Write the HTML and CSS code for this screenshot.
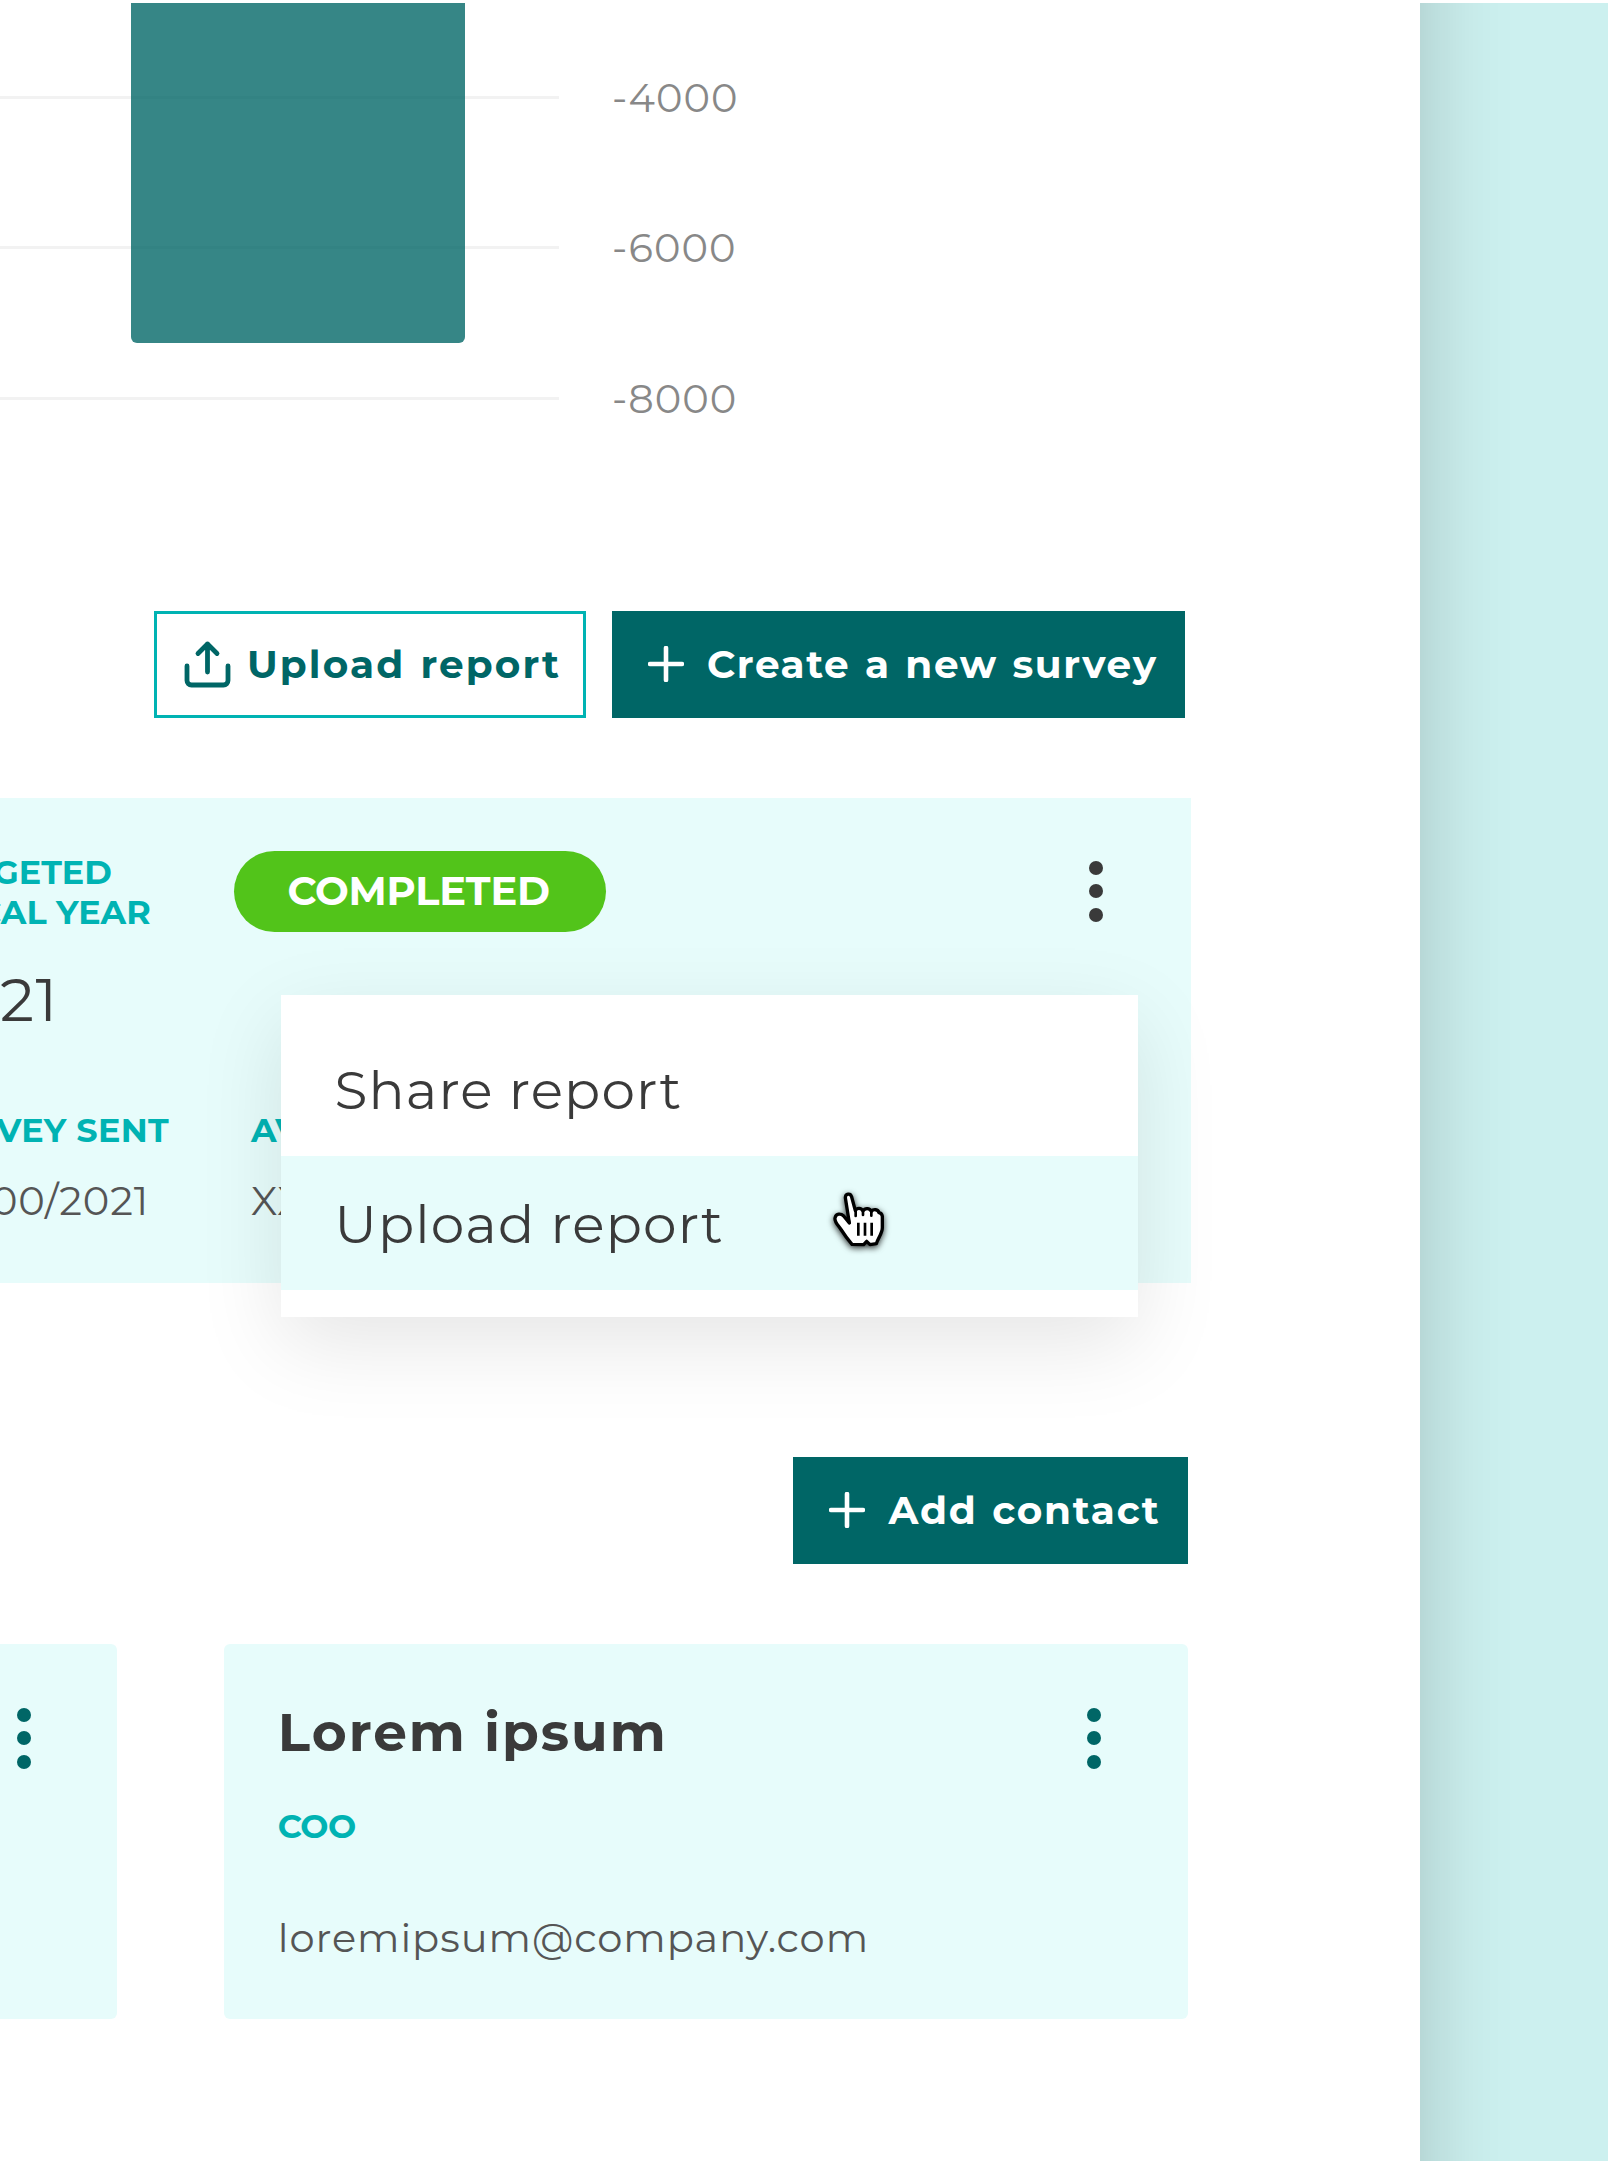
FILE: index.html
```
<!DOCTYPE html>
<html lang="en">
<head>
    <meta charset="UTF-8">
    <meta name="viewport" content="width=device-width, initial-scale=1.0">
    <title>Company report</title>
    <link rel="stylesheet" href="styles.css">
</head>
<body>

    <div class="layout">
        <main class="panel">

            <section class="chart">
                <div class="tick"><span class="grid-line"></span><span class="tick-label">-4000</span></div>
                <div class="tick"><span class="grid-line"></span><span class="tick-label">-6000</span></div>
                <div class="tick"><span class="grid-line"></span><span class="tick-label">-8000</span></div>
                <div class="bar"></div>
            </section>

            <div class="actions">
                <button class="btn btn-outline">
                    <svg class="upload-icon" width="48" height="48" viewBox="0 0 48 48" fill="none" stroke="currentColor" stroke-width="4.8" stroke-linecap="round" stroke-linejoin="round">
                        <path d="M3 26v14.5a4.500 4.500 0 0 0 4.500 4.500h32a4.500 4.500 0 0 0 4.500-4.500V26"/>
                        <path d="M23.500 32V4M14 13.500l9.500-9.500 9.500 9.500"/>
                    </svg>
                    <span>Upload report</span>
                </button>
                <button class="btn btn-create">
                    <svg class="plus-icon" width="36" height="36" viewBox="0 0 36 36" fill="none" stroke="currentColor" stroke-width="4.600" stroke-linecap="round">
                        <path d="M18 2v32M2 18h32"/>
                    </svg>
                    <span>Create a new survey</span>
                </button>
            </div>

            <section class="survey-card">
                <div class="survey-col">
                    <div class="label">TARGETED<br>FISCAL YEAR</div>
                    <div class="year">2021</div>
                    <div class="label sent">SURVEY SENT</div>
                    <div class="value">00/00/2021</div>
                </div>
                <div class="survey-col-status">
                    <div class="status">COMPLETED</div>
                    <div class="label">AVG</div>
                    <div class="value">XX</div>
                </div>
                <div class="dots dots-dark"><i></i><i></i><i></i></div>

                <div class="menu">
                    <div class="menu-item">Share report</div>
                    <div class="menu-item active">Upload report</div>
                    <svg class="cursor" width="90" height="90" viewBox="0 0 270 270">
                        <path d="M91 68C91 55 107 53 110 66L121 107C126 98 139 98 144 108C150 98 164 99 169 109C176 101 189 103 192 113C198 114 201 118 202 124V158C202 174 190 188 184 206L165 209L155 199L146 209L111 208C97 192 86 176 77 162C69 150 58 141 60 129C63 114 78 115 86 123L103 144Z" fill="#fff" stroke="#000" stroke-width="10" stroke-linejoin="round"/>
                        <path d="M122 106v17M144 107v13M169 108v14M103 144l-3-16" stroke="#000" stroke-width="8" stroke-linecap="round"/>
                        <path d="M130 143v39M150 143v39M170 143v39" stroke="#000" stroke-width="8"/>
                    </svg>
                </div>
            </section>

            <div class="actions actions-contact">
                <button class="btn btn-add">
                    <svg class="plus-icon" width="36" height="36" viewBox="0 0 36 36" fill="none" stroke="currentColor" stroke-width="4.600" stroke-linecap="round">
                        <path d="M18 2v32M2 18h32"/>
                    </svg>
                    <span>Add contact</span>
                </button>
            </div>

            <section class="contacts">
                <div class="contact-card contact-prev">
                    <div class="dots"><i></i><i></i><i></i></div>
                </div>
                <div class="contact-card">
                    <div class="contact-info">
                        <h2>Lorem ipsum</h2>
                        <div class="label role">COO</div>
                        <div class="email">loremipsum@company.com</div>
                    </div>
                    <div class="dots"><i></i><i></i><i></i></div>
                </div>
            </section>

        </main>
    </div>

</body>
</html>
```
FILE: styles.css
```
* {
    box-sizing: border-box;
}

body {
    margin: 0;
    padding-top: 2.5px;
    height: 2161px;
    overflow: hidden;
    background: #fff;
    color: #3a3a3a;
    font-family: Montserrat, Inter, sans-serif;
}

.layout {
    height: 2158.5px;
    overflow: hidden;
    background: #ccf0ef;
}

/* panel runs past the top and bottom so its shadow stays even */
.panel {
    width: 1420px;
    height: 2358.5px;
    margin-top: -100px;
    padding-top: 100px;
    background: #fff;
    box-shadow: 0 0 86px rgba(0, 0, 0, 0.2);
}

/* chart */
.chart {
    position: relative;
    padding-top: 20px;
}

.tick {
    display: flex;
    align-items: center;
    height: 150.3px;
}

.grid-line {
    width: 559px;
    height: 3px;
    background: #f2f2f2;
}

.tick-label {
    margin-left: 53px;
    font-size: 40px;
    letter-spacing: 1px;
    color: #888;
}

.bar {
    position: absolute;
    top: 0;
    left: 131px;
    width: 334px;
    height: 340.5px;
    background: rgba(0, 102, 102, 0.79);
    border-radius: 0 0 6px 6px;
}

/* buttons */
.actions {
    display: flex;
    justify-content: flex-end;
    gap: 26.5px;
    margin: 137.5px 235.5px 0 0;
}

.btn {
    display: flex;
    align-items: center;
    height: 107px;
    padding: 0 0 1px;
    border: none;
    background: #006666;
    color: #fff;
    font-family: inherit;
    font-size: 39px;
    font-weight: 700;
    word-spacing: 2px;
    white-space: nowrap;
}

.btn svg {
    flex-shrink: 0;
}

.btn-outline {
    width: 432px;
    padding-left: 27px;
    border: 3px solid #00b3b3;
    background: #fff;
    color: #006666;
    letter-spacing: 2.1px;
}

.upload-icon {
    margin-right: 15.5px;
}

.btn-create {
    width: 572.5px;
    padding-left: 36px;
    letter-spacing: 1.6px;
}

.btn-create .plus-icon {
    margin-right: 23px;
}

.actions-contact {
    margin: 174px 232px 0 0;
}

.btn-add {
    width: 395px;
    padding-left: 35.5px;
    letter-spacing: 1.75px;
}

.btn-add .plus-icon {
    margin-right: 24px;
}

/* survey card */
.survey-card {
    position: relative;
    display: flex;
    width: 1191px;
    height: 485px;
    margin-top: 80px;
    padding-right: 88.5px;
    background: #e7fcfb;
}

.label {
    font-size: 33.4px;
    line-height: 40px;
    font-weight: 700;
    color: #00b3b3;
    white-space: nowrap;
}

.sent {
    letter-spacing: 0.3px;
}

.role {
    letter-spacing: -0.5px;
}

.survey-col {
    width: 310.5px;
    margin-left: -76.5px;
    padding-top: 54.5px;
}

.year {
    margin: 38px 0 80px;
    font-size: 60px;
    line-height: 60px;
    letter-spacing: 1.4px;
}

.value {
    margin-top: 26px;
    font-size: 40px;
    line-height: 50px;
    letter-spacing: 0.9px;
    color: #555;
}

.survey-col-status {
    padding-top: 53px;
}

.status {
    width: 372px;
    height: 81px;
    margin-bottom: 178.5px;
    padding-left: 53.5px;
    border-radius: 41px;
    background: #52c41a;
    color: #fff;
    font-size: 40px;
    line-height: 80px;
    font-weight: 700;
    letter-spacing: -0.2px;
}

.survey-col-status .label,
.survey-col-status .value {
    margin-left: 17px;
}

.dots {
    display: flex;
    flex-direction: column;
    gap: 9.5px;
    margin: 63.2px 0 0 auto;
}

.dots i {
    width: 14px;
    height: 14px;
    border-radius: 50%;
    background: #006666;
}

.dots-dark {
    margin-top: 62.7px;
}

.dots-dark i {
    background: #3a3a3a;
}

/* dropdown */
.menu {
    position: absolute;
    top: 197px;
    left: 281px;
    width: 857px;
    padding: 27px 0;
    background: #fff;
    box-shadow: 0 27px 80px rgba(0, 0, 0, 0.1);
}

.menu-item {
    height: 134px;
    padding-left: 53.5px;
    font-size: 53.4px;
    line-height: 135px;
    letter-spacing: 1.15px;
}

.menu-item.active {
    background: #e7fcfb;
}

.cursor {
    position: absolute;
    top: 180.5px;
    left: 533.5px;
    filter: drop-shadow(0 2px 3px rgba(0, 0, 0, 0.8));
}

/* contacts */
.contacts {
    display: flex;
    gap: 107px;
    margin-top: 80.5px;
}

.contact-card {
    display: flex;
    width: 963.5px;
    height: 374.5px;
    padding: 0 86.5px 0 53.7px;
    border-radius: 6px;
    background: #e7fcfb;
}

.contact-prev {
    width: 117px;
    padding: 0 86.5px 0 0;
    border-radius: 0 6px 6px 0;
}

.contact-info {
    padding-top: 58px;
}

.contact-info h2 {
    margin: 0 0 43.5px;
    font-size: 53.4px;
    line-height: 60px;
    font-weight: 700;
    letter-spacing: 1.97px;
}

.email {
    margin-top: 67px;
    font-size: 40px;
    line-height: 50px;
    letter-spacing: 0.95px;
    color: #555;
}
```
